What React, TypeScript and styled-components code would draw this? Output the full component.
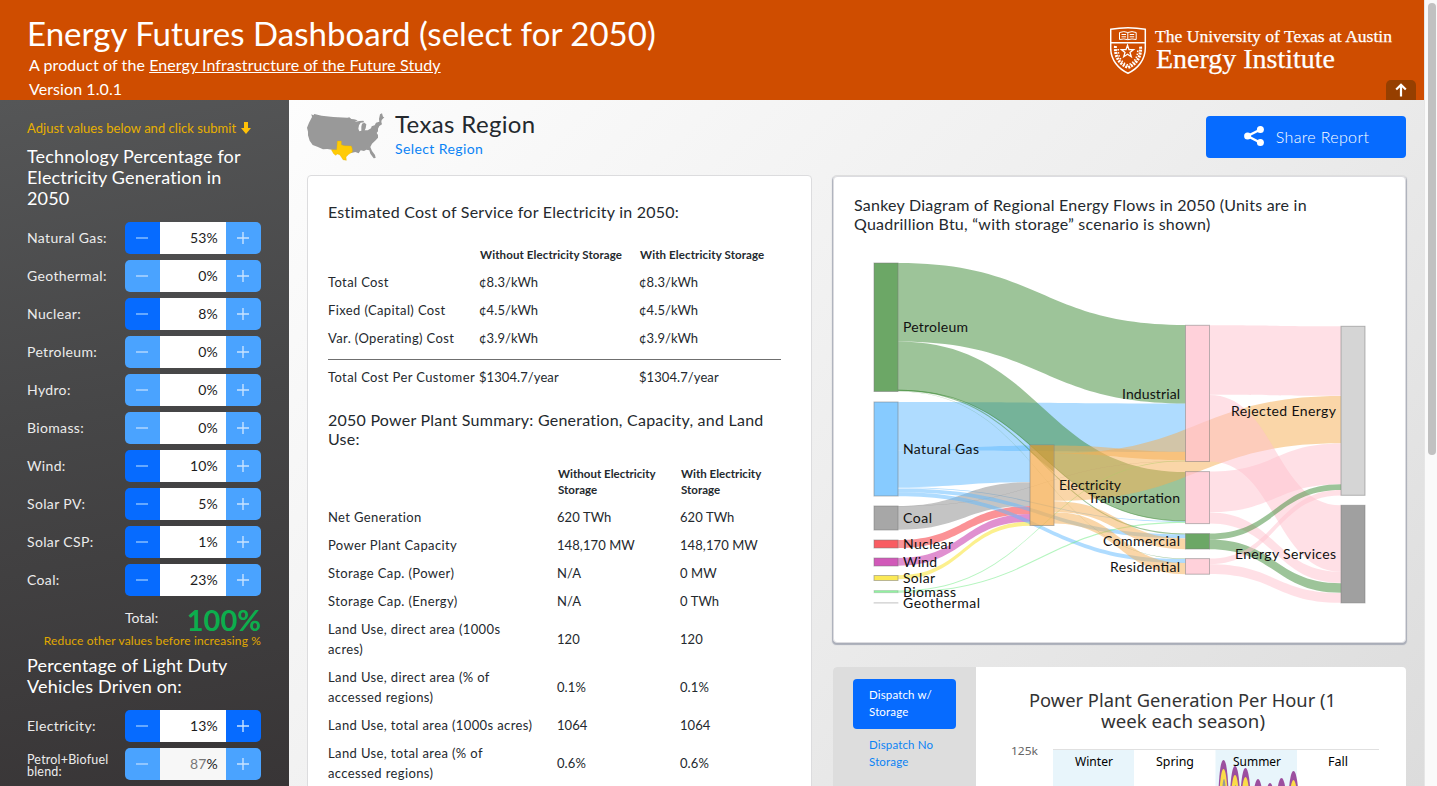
import React from "react";
import styled, { createGlobalStyle, css } from "styled-components";

const GlobalStyle = createGlobalStyle`
  * { box-sizing: border-box; }
  html, body { margin: 0; height: 100%; overflow: hidden; }
  body { font-family: Lato, "Open Sans", sans-serif; color: #24292e; background: #fafafa; }
  h1, h2, h3, p { margin: 0; font-weight: 400; }
  button { font: inherit; border: 0; padding: 0; }
`;

const Page = styled.div`
  display: flex;
  width: 1437px;
  height: 786px;
  overflow: hidden;
`;
const Site = styled.div`
  width: 1424px;
  display: flex;
  flex-direction: column;
`;
const ScrollTrack = styled.div`
  width: 13px;
  background: #fafafa;
  border-left: 1px solid #e6e6e6;
  padding: 3px 1px 0 3px;
`;
const ScrollThumb = styled.div`
  width: 8px;
  height: 452px;
  border-radius: 4px;
  background: #c1c1c1;
`;

/* Header */
const Header = styled.header`
  height: 100px;
  flex: none;
  background: #cf4d00;
  color: #fff;
  display: flex;
  justify-content: space-between;
  padding: 0 8px 0 27px;
`;
const Title = styled.h1`
  font-size: 33px;
  line-height: 40px;
  margin-top: 13px;
  letter-spacing: 0.04px;
  white-space: nowrap;
`;
const Sub = styled.p`
  font-size: 16px;
  line-height: 24px;
  letter-spacing: 0.08px;
  padding-left: 2px;
  white-space: nowrap;
`;
const SubLink = styled.a`
  text-decoration: underline;
`;
const HeaderRight = styled.div`
  display: flex;
  align-items: flex-end;
`;
const Brand = styled.svg`
  width: 290px;
  height: 56px;
  margin-bottom: 22px;
  margin-right: -14px;
`;
const TopButton = styled.button`
  width: 30px;
  height: 20px;
  border-radius: 5px 5px 0 0;
  background: #963f00;
  display: flex;
  align-items: center;
  justify-content: center;
`;

const Body = styled.div`
  display: flex;
  flex: 1;
  min-height: 0;
`;

/* Sidebar */
const Sidebar = styled.aside`
  width: 289px;
  flex: none;
  padding: 18px 28px 0 27px;
  background: linear-gradient(170deg, #555657 0%, #464647 45%, #383536 100%);
  color: #fff;
  overflow: hidden;
`;
const Hint = styled.p<{ $right?: boolean }>`
  display: flex;
  align-items: center;
  gap: 5px;
  justify-content: ${(p) => (p.$right ? "flex-end" : "flex-start")};
  color: ${(p) => (p.$right ? "#e0a800" : "#e8b000")};
  font-size: ${(p) => (p.$right ? "12px" : "13px")};
  line-height: 20px;
  letter-spacing: ${(p) => (p.$right ? "0.14px" : "0.03px")};
  white-space: nowrap;
`;
const SideHeading = styled.h2<{ $gap: number }>`
  font-size: 18px;
  line-height: 21px;
  letter-spacing: 0.17px;
  margin: ${(p) => p.$gap}px 0 13px;
`;
const Field = styled.div`
  display: flex;
  align-items: center;
  height: 32px;
  margin-bottom: 6px;
`;
const FieldLabel = styled.label<{ $small?: boolean }>`
  width: 98px;
  flex: none;
  color: #ececec;
  font-size: ${(p) => (p.$small ? "12.5px" : "14px")};
  line-height: ${(p) => (p.$small ? "12px" : "20px")};
  letter-spacing: ${(p) => (p.$small ? "0.2px" : "0.35px")};
  padding-top: ${(p) => (p.$small ? "4px" : "0")};
`;
const Stepper = styled.div`
  display: flex;
  width: 136px;
  height: 32px;
  border-radius: 5px;
  overflow: hidden;
`;
const StepButton = styled.button<{ $on?: boolean }>`
  width: 35px;
  background: ${(p) => (p.$on ? "#066bff" : "#4aa3ff")};
  display: flex;
  align-items: center;
  justify-content: center;
  padding-right: 1px;
`;
const Value = styled.div<{ $muted?: boolean }>`
  flex: 1;
  text-align: right;
  padding-right: 8px;
  font-size: 14px;
  line-height: 32px;
  letter-spacing: 0.2px;
  background: ${(p) => (p.$muted ? "#f7f7f7" : "#fff")};
  color: #1c1c1c;
`;
const ValueNumber = styled.span<{ $muted?: boolean }>`
  color: ${(p) => (p.$muted ? "#777" : "inherit")};
`;
const TotalRow = styled.div`
  display: flex;
  justify-content: space-between;
  height: 29px;
  padding-left: 98px;
  font-size: 14px;
  line-height: 32px;
  color: #ececec;
`;
const Total = styled.strong`
  color: #0cae4d;
  font-size: 29px;
  line-height: 36px;
  font-weight: 700;
`;

/* Main */
const Main = styled.main`
  flex: 1;
  min-width: 0;
  padding: 12px 18px 0;
  background: linear-gradient(135deg, #fdfdfd 0%, #eeeeee 50%, #dcdcdc 100%);
  overflow: hidden;
`;
const RegionBar = styled.div`
  display: flex;
  height: 63px;
`;
const MapIcon = styled.svg`
  width: 78px;
  height: 50px;
  margin-right: 10px;
`;
const RegionName = styled.h2`
  font-size: 24px;
  line-height: 28px;
  letter-spacing: 0.35px;
  margin-top: -2px;
`;
const RegionLink = styled.a`
  color: #0b83f5;
  font-size: 14px;
  line-height: 19px;
  letter-spacing: 0.4px;
  padding-top: 1px;
  display: block;
`;
const ShareButton = styled.button`
  width: 200px;
  height: 42px;
  margin: 4px 0 0 auto;
  padding: 0 0 2px 1px;
  border-radius: 4px;
  background: #066bff;
  color: #fff;
  font-size: 16px;
  font-weight: 300;
  letter-spacing: 0.35px;
  display: flex;
  align-items: center;
  justify-content: center;
  gap: 12px;
`;
const Columns = styled.div`
  display: flex;
  gap: 21px;
  align-items: flex-start;
`;
const card = css`
  background: #fff;
  border: 1px solid #dcdcde;
  border-radius: 4px;
`;
const ReportCard = styled.section`
  ${card}
  width: 505px;
  height: 640px;
  flex: none;
  padding: 26px 20px 0;
`;
const RightColumn = styled.div`
  flex: 1;
  min-width: 0;
`;
const SankeyCard = styled.section`
  ${card}
  height: 467px;
  margin-top: 1px;
  padding: 18px 20px 0;
  box-shadow: 0 -1px 0 #dedede, 0 1px 1px 0.5px #a9adb8;
  border-color: #dcdce0;
`;
const CardHeading = styled.h3`
  font-size: 16px;
  line-height: 19px;
  letter-spacing: 0.24px;
`;
const grid = css<{ $wide?: boolean }>`
  display: grid;
  grid-template-columns: ${(p) => (p.$wide ? "229px 123px 1fr" : "151px 160px 1fr")};
  width: 453px;
  align-items: center;
`;
const HeadRow = styled.div<{ $wide?: boolean }>`
  ${grid}
  font-size: 11.5px;
  font-weight: 700;
  line-height: 16px;
  letter-spacing: ${(p) => (p.$wide ? "0.02px" : "0.12px")};
  margin-top: ${(p) => (p.$wide ? "18px" : "26px")};
  margin-bottom: 5px;
`;
const HeadCell = styled.span`
  padding-left: 1px;
`;
const DataRow = styled.div<{ $wide?: boolean; $summary?: boolean }>`
  ${grid}
  font-size: 13px;
  line-height: 20px;
  letter-spacing: 0.08px;
  padding: 4px 0;
  ${(p) =>
    p.$summary &&
    css`
      margin-top: 7px;
      border-top: 1px solid #6f6f6f;
      padding-top: 7px;
      margin-bottom: 19px;
    `}
`;
const LabelCell = styled.span<{ $w?: number }>`
  letter-spacing: 0.38px;
  max-width: ${(p) => p.$w ?? 230}px;
  white-space: ${(p) => (p.$w ? "normal" : "nowrap")};
`;
const SankeyChart = styled.svg`
  display: block;
  width: 533px;
  height: 380px;
  margin-top: 7px;
`;
const DispatchCard = styled.section`
  ${card}
  display: flex;
  border: 0;
  overflow: hidden;
  margin-top: 24px;
  height: 400px;
`;
const Tabs = styled.nav`
  width: 143px;
  flex: none;
  background: #dddddd;
  padding: 12px 20px;
`;
const Tab = styled.a<{ $on?: boolean }>`
  display: block;
  height: 50px;
  padding: 7px 16px;
  border-radius: 4px;
  font-size: 11.5px;
  line-height: 17px;
  letter-spacing: 0.15px;
  background: ${(p) => (p.$on ? "#066bff" : "transparent")};
  color: ${(p) => (p.$on ? "#fff" : "#0b83f5")};
`;
const HourChart = styled.svg`
  width: 430px;
  height: 400px;
`;

const COLORS: Record<string, string> = {
  green: "#3b8933",
  blue: "#5fb9ff",
  gray: "#898989",
  red: "#f7252d",
  purple: "#c121a1",
  yellow: "#f9e11d",
  mint: "#6cec80",
  orange: "#f5ad51",
  pink: "#ffc2cd",
  light: "#c7c7c7",
  dark: "#808080",
};

type Link = [number, number, number, number, number, string];
const X = [898, 1054, 1209.5];
const E = [1030, 1185.5, 1341];

/* from column, to column, source y, target y, thickness, colour */
const LINKS: Link[] = [
  [0, 1, 402, 403.5, 48.5, "blue"],
  [0, 0, 450.5, 445.6, 36.5, "blue"],
  [0, 1, 263, 325, 78.5, "green"],
  [0, 1, 341.5, 472, 49, "green"],
  [0, 1, 389.8, 533.4, 1.2, "green"],
  [0, 1, 389.8, 520.4, 1, "green"],
  [0, 1, 391.3, 558.6, 0.3, "green"],
  [0, 1, 487.3, 521, 0.8, "blue"],
  [0, 0, 506, 482.2, 23.7, "gray"],
  [0, 1, 506, 461, 0.3, "gray"],
  [0, 0, 540, 506, 8, "red"],
  [0, 0, 558, 514, 7.8, "purple"],
  [0, 0, 575.2, 521.8, 4, "yellow"],
  [0, 1, 488.5, 534.4, 3.8, "blue"],
  [0, 1, 492.3, 559, 4, "blue"],
  [0, 1, 590.6, 460.4, 0.8, "mint"],
  [0, 1, 591.6, 521.8, 1.2, "mint"],
  [1, 1, 445.5, 451.8, 8.2, "orange"],
  [1, 2, 453.5, 396, 47.3, "orange"],
  [1, 1, 501.3, 538.4, 10.8, "orange"],
  [1, 1, 512.3, 563, 11.3, "orange"],
  [2, 2, 325.3, 326.3, 69.5, "pink"],
  [2, 2, 395, 505.3, 66.5, "pink"],
  [2, 2, 471.6, 443.6, 40.6, "pink"],
  [2, 2, 512.4, 571.8, 11, "pink"],
  [2, 2, 533.6, 484.2, 5.8, "green"],
  [2, 2, 539.6, 583.2, 9.6, "green"],
  [2, 2, 558.6, 490, 5.6, "pink"],
  [2, 2, 564.3, 593, 9.8, "pink"],
];

const ribbon = ([a, b, y0, y1, w]: Link) => {
  const x0 = X[a];
  const x1 = E[b];
  const m = (x0 + x1) / 2;
  return `M${x0},${y0}C${m},${y0} ${m},${y1} ${x1},${y1}V${y1 + w}C${m},${y1 + w} ${m},${y0 + w} ${x0},${y0 + w}Z`;
};

const NODES: [number, number, number, string][] = [
  [874, 263, 128.5, "green"],
  [874, 402, 94, "blue"],
  [874, 506, 24, "gray"],
  [874, 540, 8, "red"],
  [874, 558, 8, "purple"],
  [874, 575.5, 5, "yellow"],
  [874, 590.5, 2.2, "mint"],
  [874, 602.7, 0.4, "light"],
  [1030, 445, 80.5, "orange"],
  [1185.5, 325.3, 136.2, "pink"],
  [1185.5, 471.6, 52, "pink"],
  [1185.5, 533.6, 15.4, "green"],
  [1185.5, 558.6, 15.6, "pink"],
  [1341, 326.3, 169, "light"],
  [1341, 505.3, 97.6, "dark"],
];

/* text, x, baseline, width, right aligned */
const NODE_LABELS: [string, number, number, number, boolean?][] = [
  ["Petroleum", 903, 332, 65],
  ["Natural Gas", 903, 454, 76],
  ["Coal", 903, 523, 29],
  ["Nuclear", 903, 549, 50],
  ["Wind", 903, 567, 34],
  ["Solar", 903, 583, 32],
  ["Biomass", 903, 597, 53],
  ["Geothermal", 903, 608, 77],
  ["Electricity", 1059, 490, 62],
  ["Industrial", 1180, 399, 58, true],
  ["Transportation", 1180, 503, 92, true],
  ["Commercial", 1180, 546, 77, true],
  ["Residential", 1180, 572, 70, true],
  ["Rejected Energy", 1336, 416, 105, true],
  ["Energy Services", 1336, 559, 101, true],
];

const Sankey = () => (
  <SankeyChart viewBox="854 240 533 380">
    {LINKS.map((l, i) => (
      <path key={i} d={ribbon(l)} fill={COLORS[l[5]]} fillOpacity={0.5} />
    ))}
    {NODES.map(([x, y, h, c], i) => (
      <rect
        key={i}
        x={x}
        y={y}
        width={24}
        height={h}
        fill={COLORS[c]}
        fillOpacity={0.75}
        stroke="#777"
        strokeOpacity={h < 3 ? 0.25 : 0.5}
      />
    ))}
    {/* petroleum flow showing through the electricity node */}
    <path d="M1030.5 445.5H1053.5V472L1030.5 452Z" fill="#8a7a10" fillOpacity={0.3} />
    {NODE_LABELS.map(([t, x, y, w, end]) => (
      <text key={t} x={end ? x - w : x} y={y} textLength={w} fontSize={14} fill="#111">
        {t}
      </text>
    ))}
  </SankeyChart>
);

const Shield = () => (
  <g fill="none" stroke="#fff" strokeWidth="1.5">
    <path d="M1110.7 29.3Q1128 26.2 1145.3 29.3V48C1145.3 60 1137.5 69 1128 73.2C1118.5 69 1110.7 60 1110.7 48Z" />
    <path d="M1111 42.8H1145" />
    <path
      d="M1119.5 32.5Q1124 30.7 1127.8 32.5Q1132 30.7 1136.2 32.5V39.5Q1132 38.3 1127.8 39.7Q1124 38.3 1119.5 39.5ZM1127.8 32.5V39.5M1121.5 34.5H1126M1121.5 36.8H1126M1129.7 34.5H1134.2M1129.7 36.8H1134.2"
      strokeWidth="1"
    />
    <path
      d="M1127.5 45.3L1129 49.6H1133.6L1130 52.4L1131.3 56.8L1127.5 54.2L1123.7 56.8L1125 52.4L1121.4 49.6H1126Z"
      strokeWidth="1.3"
    />
    <path d="M1115.5 46C1114.5 56 1119 64 1128 67.5C1137 64 1141.5 56 1140.5 46" strokeWidth="3" strokeDasharray="2 1" />
    <path d="M1118.2 49C1118 57 1121.5 62.5 1128 65C1134.5 62.5 1138 57 1137.8 49" strokeWidth="1.6" strokeDasharray="1.5 1.6" />
  </g>
);

const Step = ({ plus, on }: { plus?: boolean; on?: boolean }) => (
  <StepButton $on={on}>
    <svg width="12" height="12" viewBox="0 0 12 12" stroke={plus ? "#c9e3ff" : on ? "#86bcff" : "#b0d6ff"} strokeWidth="1.4">
      <path d={plus ? "M0 6H12M6 0V12" : "M0 6H12"} />
    </svg>
  </StepButton>
);

type FieldProps = { label: string; value: number; minus?: boolean; plus?: boolean; small?: boolean };
const NumberField = ({ label, value, minus, plus, small }: FieldProps) => (
  <Field>
    <FieldLabel $small={small}>{label}</FieldLabel>
    <Stepper>
      <Step on={minus} />
      <Value $muted={small}>
        <ValueNumber $muted={small}>{value}</ValueNumber>%
      </Value>
      <Step plus on={plus} />
    </Stepper>
  </Field>
);

const TECH: [string, number][] = [
  ["Natural Gas:", 53],
  ["Geothermal:", 0],
  ["Nuclear:", 8],
  ["Petroleum:", 0],
  ["Hydro:", 0],
  ["Biomass:", 0],
  ["Wind:", 10],
  ["Solar PV:", 5],
  ["Solar CSP:", 1],
  ["Coal:", 23],
];

const COSTS = [
  ["Total Cost", "¢8.3/kWh"],
  ["Fixed (Capital) Cost", "¢4.5/kWh"],
  ["Var. (Operating) Cost", "¢3.9/kWh"],
];

const PLANTS: [string, string, string, number?][] = [
  ["Net Generation", "620 TWh", "620 TWh"],
  ["Power Plant Capacity", "148,170 MW", "148,170 MW"],
  ["Storage Cap. (Power)", "N/A", "0 MW"],
  ["Storage Cap. (Energy)", "N/A", "0 TWh"],
  ["Land Use, direct area (1000s acres)", "120", "120", 185],
  ["Land Use, direct area (% of accessed regions)", "0.1%", "0.1%", 185],
  ["Land Use, total area (1000s acres)", "1064", "1064"],
  ["Land Use, total area (% of accessed regions)", "0.6%", "0.6%", 185],
];

const PEAKS: [number, number][] = [
  [1223.5, 760],
  [1235, 766],
  [1245.5, 768],
  [1258, 779],
  [1270, 783],
  [1281.5, 778],
  [1293.5, 771],
];
const peak = (x: number, y: number, w: number) =>
  `M${x - w} 800C${x - w * 0.8} ${y + 12} ${x - w * 0.5} ${y} ${x} ${y}C${x + w * 0.5} ${y} ${x + w * 0.8} ${y + 12} ${x + w} 800Z`;

const HourlyChart = () => (
  <HourChart viewBox="976 667 430 400" fontFamily='"Noto Sans", sans-serif'>
    <text x={1029} y={707} textLength={307} fontSize={18} fill="#333" lengthAdjust="spacingAndGlyphs">
      Power Plant Generation Per Hour (1
    </text>
    <text x={1101} y={728} textLength={164} fontSize={18} fill="#333" lengthAdjust="spacingAndGlyphs">
      week each season)
    </text>
    <text x={1011} y={755} textLength={27} fontSize={11} fill="#666" lengthAdjust="spacingAndGlyphs">
      125k
    </text>
    <rect x={1053} y={750} width={81} height={300} fill="#e8f5fb" />
    <rect x={1215.5} y={750} width={81.5} height={300} fill="#e8f5fb" />
    <path d="M1053 749.5H1379" stroke="#e0e0e0" />
    {PEAKS.map(([x, y]) => (
      <g key={x}>
        <path d={peak(x, y, 5.5)} fill="#9c4f9f" />
        <path d={peak(x, y + 9, 4.5)} fill="#fbdc4a" />
        <path d={peak(x + 0.5, y + 19, 2.5)} fill="#999" />
      </g>
    ))}
    <g fontSize={12} fill="#000">
      <text x={1075} y={766} textLength={38} lengthAdjust="spacingAndGlyphs">Winter</text>
      <text x={1156} y={766} textLength={38} lengthAdjust="spacingAndGlyphs">Spring</text>
      <text x={1233} y={766} textLength={48} lengthAdjust="spacingAndGlyphs">Summer</text>
      <text x={1328} y={766} textLength={20} lengthAdjust="spacingAndGlyphs">Fall</text>
    </g>
  </HourChart>
);

export default function App() {
  return (
    <Page>
      <GlobalStyle />
      <Site>
        <Header>
          <div>
            <Title>Energy Futures Dashboard (select for 2050)</Title>
            <Sub>
              A product of the <SubLink>Energy Infrastructure of the Future Study</SubLink>
            </Sub>
            <Sub>Version 1.0.1</Sub>
          </div>
          <HeaderRight>
            <Brand viewBox="1110 22 290 56">
              <Shield />
              <g fill="#fff" fontFamily='"Liberation Serif", serif' stroke="#fff" strokeWidth="0.25">
                <text x={1155} y={42} fontSize={17.5} textLength={237} lengthAdjust="spacingAndGlyphs">
                  The University of Texas at Austin
                </text>
                <text x={1156} y={67.5} fontSize={26.5} textLength={179} lengthAdjust="spacingAndGlyphs">
                  Energy Institute
                </text>
              </g>
            </Brand>
            <TopButton>
              <svg width="12" height="14" viewBox="0 0 12 14" fill="none" stroke="#fff" strokeWidth="2.2">
                <path d="M6 13.5V2M1.2 6.5L6 1.7L10.8 6.5" />
              </svg>
            </TopButton>
          </HeaderRight>
        </Header>
        <Body>
          <Sidebar>
            <Hint>
              Adjust values below and click submit
              <svg width="10" height="12" viewBox="0 0 10 12" fill="#ffc107">
                <path d="M3 0H7V6H10L5 12L0 6H3Z" />
              </svg>
            </Hint>
            <SideHeading $gap={8}>Technology Percentage for Electricity Generation in 2050</SideHeading>
            {TECH.map(([label, value]) => (
              <NumberField key={label} label={label} value={value} minus={value > 0} />
            ))}
            <TotalRow>
              Total: <Total>100%</Total>
            </TotalRow>
            <Hint $right>Reduce other values before increasing %</Hint>
            <SideHeading $gap={4}>Percentage of Light Duty Vehicles Driven on:</SideHeading>
            <NumberField label="Electricity:" value={13} minus plus />
            <NumberField label="Petrol+Biofuel blend:" value={87} small />
          </Sidebar>
          <Main>
            <RegionBar>
              <MapIcon viewBox="51 36 234 150">
                <path
                  fill="#999"
                  d="M66 51L64 43L70 46L73 42L95 47L130 51L172 53L178 52L184 57L192 58L203 61L194 66L208 63L220 62L223 67L212 68L207 76L205 86L208 94L214 92L214 80L216 71L223 68L229 73L227 85L224 91L233 91L243 85L245 79L254 76L258 68L268 65L267 57L270 43L276 40L279 50L283 52L275 60L274 66L276 73L268 78L264 86L264 94L260 99L264 105L264 113L257 121L246 131L241 141L246 153L255 165L257 174L251 175L241 161L238 151L229 149L222 153L212 151L206 160L196 156L187 158L140 160L126 149L112 147L99 148L82 140L68 135L59 122L54 106L54 95L51 83L57 68Z"
                />
                <path
                  fill="#ffcb05"
                  stroke="#e0ad00"
                  d="M142 123H154V134L163 137L184 138L187 147V156L176 163L168 171L169 181L159 179L154 171L149 164L142 162L137 166L131 161L124 149H140Z"
                />
              </MapIcon>
              <div>
                <RegionName>Texas Region</RegionName>
                <RegionLink>Select Region</RegionLink>
              </div>
              <ShareButton>
                <svg width="20" height="20" viewBox="0 0 20 20" fill="#fff">
                  <path d="M16.5 3.5L3.5 10L16.5 16.8" fill="none" stroke="#fff" strokeWidth="2.4" />
                  <circle cx="16.4" cy="3.6" r="3.5" />
                  <circle cx="3.6" cy="10.1" r="3.5" />
                  <circle cx="16.4" cy="16.5" r="3.5" />
                </svg>
                Share Report
              </ShareButton>
            </RegionBar>
            <Columns>
              <ReportCard>
                <CardHeading>Estimated Cost of Service for Electricity in 2050:</CardHeading>
                <HeadRow>
                  <span />
                  <HeadCell>Without Electricity Storage</HeadCell>
                  <HeadCell>With Electricity Storage</HeadCell>
                </HeadRow>
                {COSTS.map(([label, v]) => (
                  <DataRow key={label}>
                    <LabelCell>{label}</LabelCell>
                    <span>{v}</span>
                    <span>{v}</span>
                  </DataRow>
                ))}
                <DataRow $summary>
                  <LabelCell>Total Cost Per Customer</LabelCell>
                  <span>$1304.7/year</span>
                  <span>$1304.7/year</span>
                </DataRow>
                <CardHeading>2050 Power Plant Summary: Generation, Capacity, and Land Use:</CardHeading>
                <HeadRow $wide>
                  <span />
                  <HeadCell>
                    Without Electricity
                    <br />
                    Storage
                  </HeadCell>
                  <HeadCell>
                    With Electricity
                    <br />
                    Storage
                  </HeadCell>
                </HeadRow>
                {PLANTS.map(([label, a, b, w]) => (
                  <DataRow $wide key={label}>
                    <LabelCell $w={w}>{label}</LabelCell>
                    <span>{a}</span>
                    <span>{b}</span>
                  </DataRow>
                ))}
              </ReportCard>
              <RightColumn>
                <SankeyCard>
                  <CardHeading>
                    Sankey Diagram of Regional Energy Flows in 2050 (Units are in Quadrillion Btu, “with storage” scenario is shown)
                  </CardHeading>
                  <Sankey />
                </SankeyCard>
                <DispatchCard>
                  <Tabs>
                    <Tab $on>Dispatch w/ Storage</Tab>
                    <Tab>Dispatch No Storage</Tab>
                  </Tabs>
                  <HourlyChart />
                </DispatchCard>
              </RightColumn>
            </Columns>
          </Main>
        </Body>
      </Site>
      <ScrollTrack>
        <ScrollThumb />
      </ScrollTrack>
    </Page>
  );
}
